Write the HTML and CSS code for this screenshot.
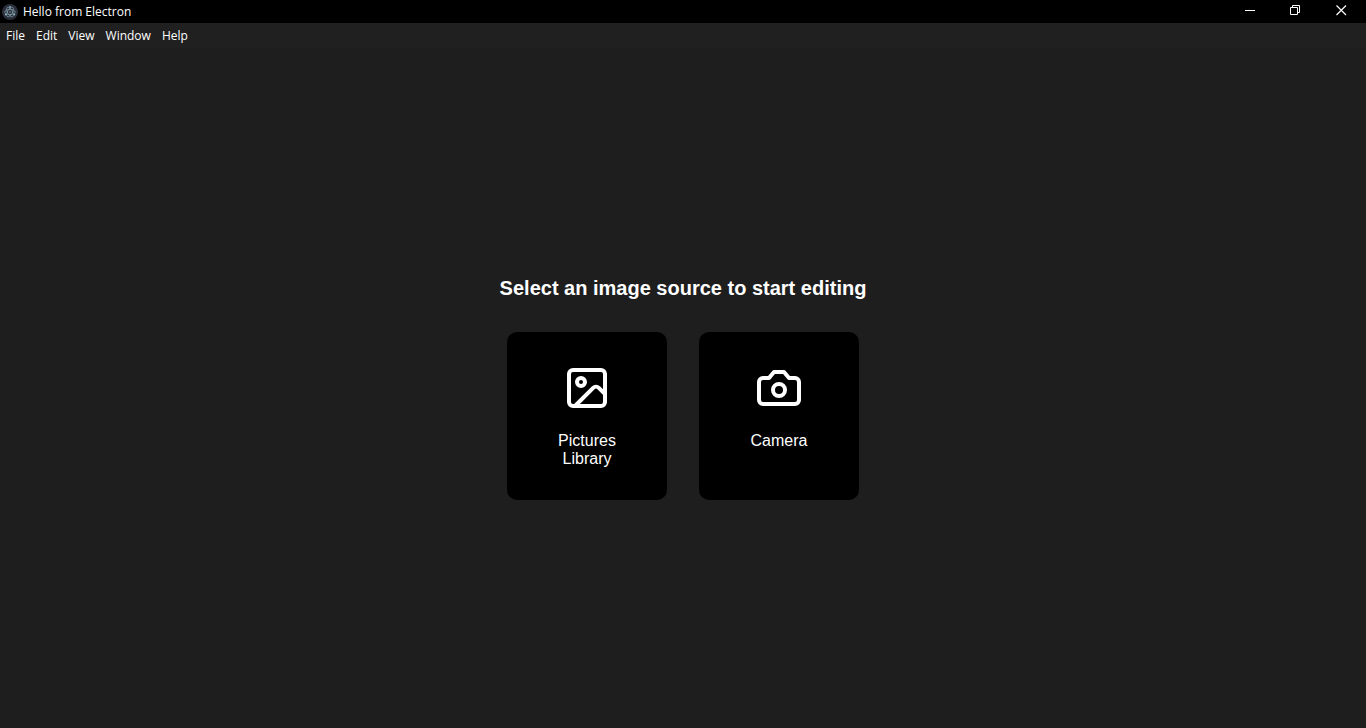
FILE: index.html
```html
<!DOCTYPE html>
<html lang="en">
<head>
<meta charset="utf-8">
<meta name="viewport" content="width=device-width, initial-scale=1">
<title>Hello from Electron</title>
<link rel="stylesheet" href="styles.css">
</head>
<body>
<header class="titlebar">
  <svg class="app-icon" viewBox="0 0 16 16" aria-hidden="true">
    <circle cx="8" cy="8" r="8" fill="#2b2e3a"/>
    <g fill="none" stroke="#7f9fa8" stroke-width=".7">
      <ellipse cx="8" cy="8" rx="5.300" ry="2.500"/>
      <ellipse cx="8" cy="8" rx="5.300" ry="2.500" transform="rotate(60 8 8)"/>
      <ellipse cx="8" cy="8" rx="5.300" ry="2.500" transform="rotate(120 8 8)"/>
    </g>
    <g fill="#9fc6ce"><circle cx="8" cy="8" r=".7"/><circle cx="3.600" cy="10.600" r=".8"/><circle cx="12.400" cy="10.600" r=".8"/><circle cx="8" cy="2.900" r=".8"/></g>
  </svg>
  <span class="title">Hello from Electron</span>
  <div class="window-controls">
    <button class="control" type="button" aria-label="Minimize"><svg viewBox="0 0 11 11"><path d="M1 5.500h10"/></svg></button>
    <button class="control" type="button" aria-label="Restore"><svg viewBox="0 0 11 11"><path d="M.5 2.500h7v7h-7zM2.500 2.500v-2h7v7h-2"/></svg></button>
    <button class="control" type="button" aria-label="Close"><svg viewBox="0 0 11 11"><path stroke-width="1.200" d="M.5.5l9.500 9.500M10 .5L.5 10"/></svg></button>
  </div>
</header>
<nav class="menubar" aria-label="Application menu">
  <button class="menu-item" type="button">File</button>
  <button class="menu-item" type="button">Edit</button>
  <button class="menu-item" type="button">View</button>
  <button class="menu-item" type="button">Window</button>
  <button class="menu-item" type="button">Help</button>
</nav>
<main class="content">
  <h1 class="heading">Select an image source to start editing</h1>
  <div class="sources">
    <button class="card" type="button">
      <svg class="card-icon" viewBox="0 0 24 24" aria-hidden="true"><rect x="3" y="3" width="18" height="18" rx="2"/><circle cx="9" cy="9" r="2"/><path d="m21 15-3.086-3.086a2 2 0 0 0-2.828 0L6 21"/></svg>
      <span class="card-label">Pictures Library</span>
    </button>
    <button class="card" type="button">
      <svg class="card-icon" viewBox="0 0 24 24" aria-hidden="true"><path d="M14.500 4h-5L7 7H4a2 2 0 0 0-2 2v9a2 2 0 0 0 2 2h16a2 2 0 0 0 2-2V9a2 2 0 0 0-2-2h-3z"/><circle cx="12" cy="13" r="3"/></svg>
      <span class="card-label">Camera</span>
    </button>
  </div>
</main>
</body>
</html>
```
FILE: styles.css
```css
* { box-sizing: border-box; }
body {
  margin: 0;
  min-height: 100vh;
  display: flex;
  flex-direction: column;
  background: #1e1e1e;
  color: #fff;
  font-family: "Liberation Sans", Arial, sans-serif;
}
button {
  margin: 0;
  border: 0;
  background: none;
  color: inherit;
  font: inherit;
}
.titlebar {
  display: flex;
  align-items: center;
  height: 23px;
  padding: 0 2px;
  background: #000;
  font: 12px/16px "Segoe UI", "Open Sans", sans-serif;
}
.app-icon { width: 16px; height: 16px; margin-right: 5px; }
.window-controls { display: flex; margin-left: auto; }
.control {
  display: flex;
  justify-content: center;
  width: 46px;
  height: 23px;
  padding: 5px 0 0;
}
.control svg {
  width: 11px;
  height: 11px;
  fill: none;
  stroke: #fff;
}
.menubar {
  display: flex;
  gap: 11px;
  height: 25px;
  padding: 0 6px;
  background: #202020;
  font: 12px/16px "Segoe UI", "Open Sans", sans-serif;
}
.menu-item { padding: 0; }
.content {
  flex: 1;
  display: flex;
  flex-direction: column;
  align-items: center;
  justify-content: center;
  gap: 32px;
}
.heading {
  margin: 0;
  font-size: 20px;
  line-height: 24px;
}
.sources { display: flex; gap: 32px; }
.card {
  display: flex;
  flex-direction: column;
  align-items: center;
  gap: 20px;
  width: 160px;
  min-height: 168px;
  padding: 32px;
  border-radius: 10px;
  background: #000;
  font-size: 16px;
  line-height: 18px;
}
.card-icon {
  width: 48px;
  height: 48px;
  fill: none;
  stroke: #fff;
  stroke-width: 2;
  stroke-linecap: round;
  stroke-linejoin: round;
}
```
